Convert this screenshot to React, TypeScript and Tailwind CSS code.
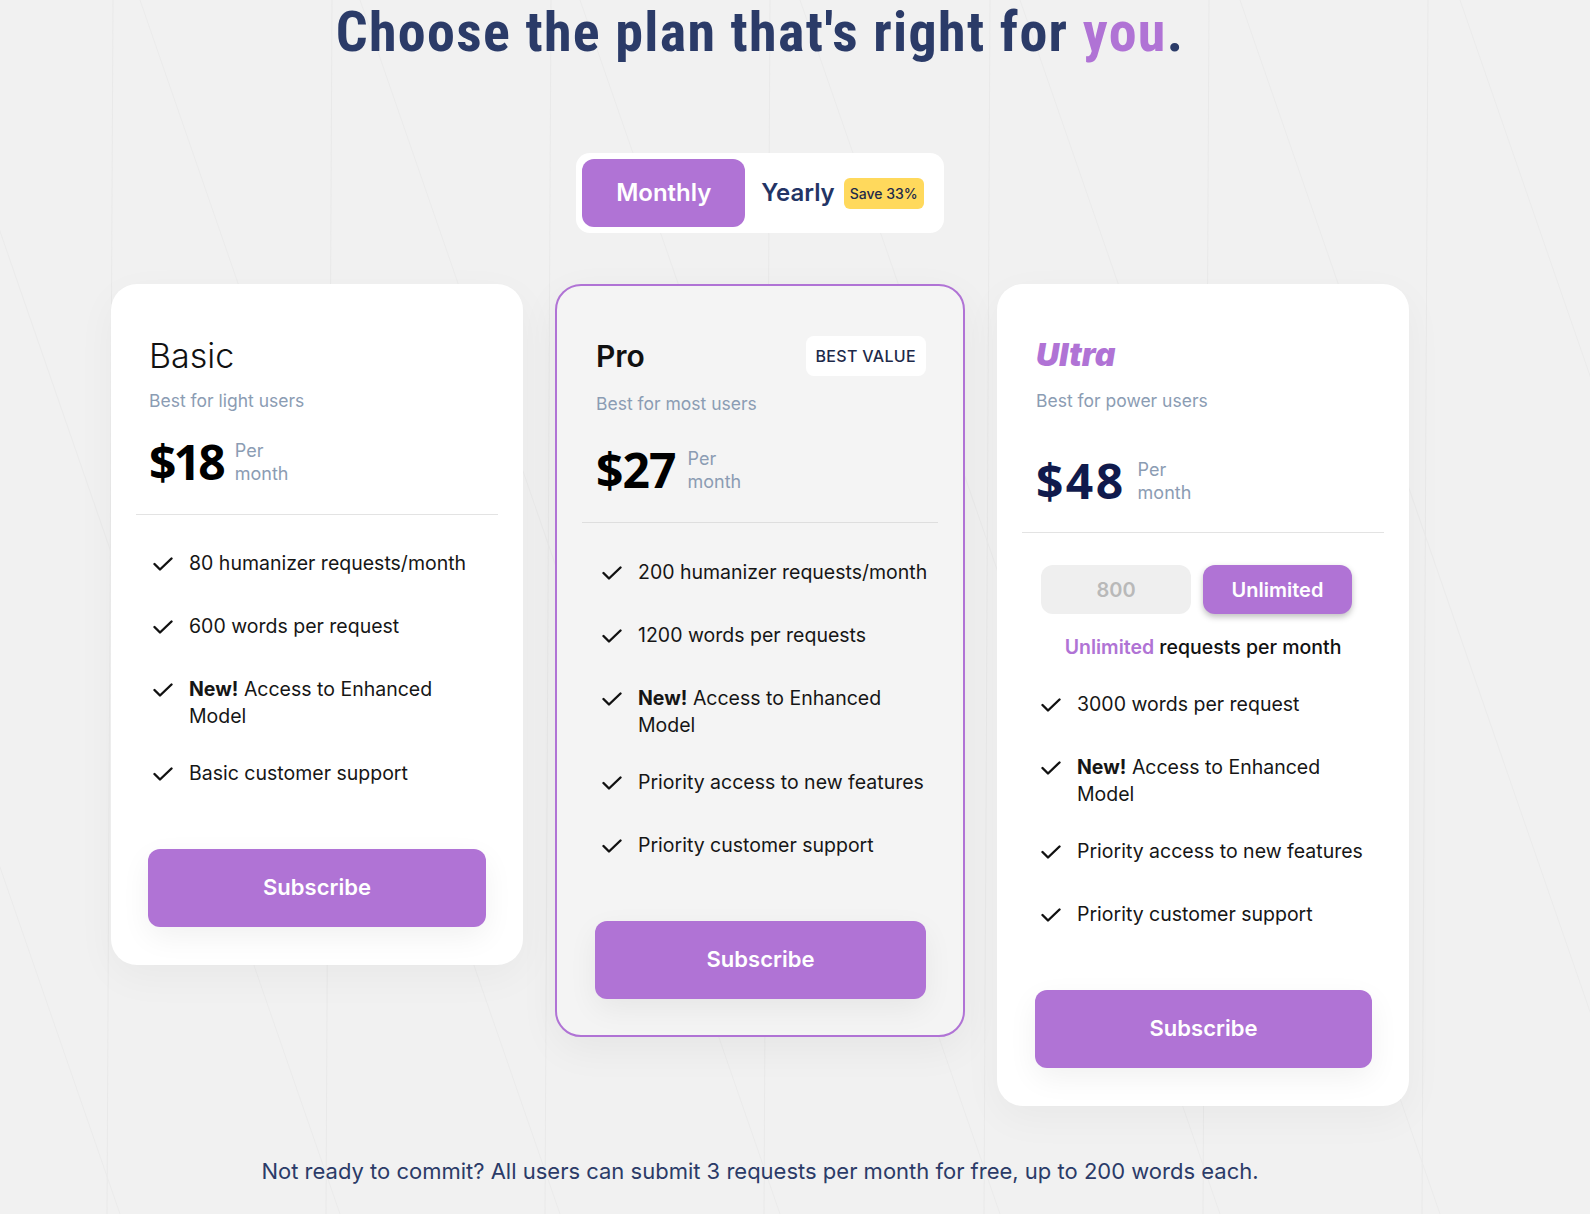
import React, { useState } from 'react';

const purple = 'bg-[#b073d5]';

const CheckIcon = () => (
  <svg width="20" height="14" viewBox="0 0 20 14" fill="none" className="mt-[7px] shrink-0">
    <path d="M1.5 7 L7 12.5 L18.5 1.5" stroke="#111111" strokeWidth="2.4" strokeLinecap="round" strokeLinejoin="round" />
  </svg>
);

type Feature = { text: string; isNew?: boolean };

const FeatureList = ({ items, className }: { items: Feature[]; className: string }) => (
  <ul className={`flex flex-col gap-[29px] ${className}`}>
    {items.map((f) => (
      <li key={f.text} className="flex items-start gap-[16px] min-h-[34px]">
        <div className="w-[20px] h-[34px] shrink-0">
          <CheckIcon />
        </div>
        <span
          className="text-[19.5px] leading-[27.4px] text-[#161616]"
          style={{ fontFamily: 'Inter, "Noto Sans", sans-serif' }}
        >
          {f.isNew ? (
            <>
              <b className="font-bold">New!</b> {f.text}
            </>
          ) : (
            f.text
          )}
        </span>
      </li>
    ))}
  </ul>
);

const SubscribeButton = ({ className }: { className: string }) => (
  <button
    className={`${purple} h-[78px] rounded-[12px] text-white text-[22px] font-semibold shadow-[0_10px_30px_rgba(0,0,0,0.06)] ${className}`}
    style={{ fontFamily: 'Inter, sans-serif' }}
  >
    Subscribe
  </button>
);

const Price = ({ amount, className }: { amount: string; className: string }) => (
  <div className="flex items-center h-[52px] gap-[12px]">
    <span className={className}>{amount}</span>
    <div
      className="flex flex-col text-[18px] leading-[23px] text-[#8b9cb3]"
      style={{ fontFamily: 'Inter, sans-serif' }}
    >
      <span>Per</span>
      <span>month</span>
    </div>
  </div>
);

const Subtitle = ({ children }: { children: React.ReactNode }) => (
  <div
    className="h-[24px] flex items-center text-[17.5px] text-[#8b9cb3]"
    style={{ fontFamily: 'Inter, sans-serif' }}
  >
    {children}
  </div>
);

const Background = () => (
  <svg className="absolute inset-0 w-full h-full" viewBox="0 0 1590 1214" preserveAspectRatio="none">
    {[113, 332, 551, 770, 990, 1209, 1428].map((x) => (
      <line key={'v' + x} x1={x} y1={0} x2={x - 6} y2={1214} stroke="#e9e9e9" strokeWidth="1" />
    ))}
    {[-300, -80, 140, 360, 580, 800, 1020, 1240, 1460].map((x) => (
      <line key={'d' + x} x1={x} y1={0} x2={x + 420} y2={1214} stroke="#ebebeb" strokeWidth="1" />
    ))}
  </svg>
);

export default function App() {
  const [billing, setBilling] = useState<'monthly' | 'yearly'>('monthly');
  const [limit, setLimit] = useState<'800' | 'unlimited'>('unlimited');

  return (
    <div className="relative w-full min-h-[1214px] bg-[#f1f1f1] overflow-hidden">
      <Background />

      <div className="relative w-[1520px] flex flex-col items-center">
        {/* Heading */}
        <h1
          className="text-[56px] leading-[64px] font-bold text-[#2b3b68] tracking-[0.024em]"
          style={{ fontFamily: '"Liberation Sans Narrow", "Roboto Condensed", Roboto, sans-serif' }}
        >
          Choose the plan that's right for <span className="text-[#b073d5]">you</span>.
        </h1>

        {/* Billing toggle */}
        <div
          className="mt-[89px] flex items-center bg-white rounded-[14px] p-[6px] pr-[20px] h-[80px]"
          style={{ fontFamily: 'Inter, sans-serif' }}
        >
          <button
            onClick={() => setBilling('monthly')}
            className={`w-[163px] h-[68px] rounded-[12px] text-[24px] font-semibold ${
              billing === 'monthly' ? 'bg-[#b073d5] text-white' : 'text-[#233465]'
            }`}
          >
            Monthly
          </button>
          <button
            onClick={() => setBilling('yearly')}
            className="ml-[16px] text-[24px] font-semibold text-[#233465]"
          >
            Yearly
          </button>
          <span className="ml-[9px] h-[31px] px-[6px] flex items-center rounded-[6px] bg-[#ffd95c] text-[14px] font-medium text-[#1e2a4a]">
            Save 33%
          </span>
        </div>

        {/* Cards */}
        <div className="mt-[51px] flex items-start gap-[32px]">
          {/* Basic */}
          <div className="w-[412px] bg-white rounded-[26px] shadow-[0_12px_40px_rgba(0,0,0,0.04)] pt-[51px] pb-[38px] flex flex-col">
            <div className="px-[38px] flex flex-col">
              <div
                className="h-[40px] flex items-center text-[34px] font-light text-[#111111]"
                style={{ fontFamily: 'Inter, sans-serif' }}
              >
                Basic
              </div>
              <div className="mt-[14px]">
                <Subtitle>Best for light users</Subtitle>
              </div>
              <div className="mt-[23px]">
                <Price
                  amount="$18"
                  className="text-[48px] font-bold text-black tracking-[-0.06em] leading-none"
                />
              </div>
            </div>
            <div className="mt-[26px] mx-[25px] h-px bg-[#e3e3e3]" />
            <FeatureList
              className="mt-[35px] pl-[42px] pr-[36px]"
              items={[
                { text: '80 humanizer requests/month' },
                { text: '600 words per request' },
                { text: 'Access to Enhanced Model', isNew: true },
                { text: 'Basic customer support' },
              ]}
            />
            <SubscribeButton className="mt-[55px] mx-[37px]" />
          </div>

          {/* Pro */}
          <div className="w-[410px] bg-[#f4f4f4] border-2 border-[#b073d5] rounded-[26px] shadow-[0_12px_40px_rgba(0,0,0,0.05)] pt-[50px] pb-[36px] flex flex-col">
            <div className="pl-[39px] pr-[37px] flex flex-col">
              <div className="h-[40px] flex items-center justify-between">
                <span
                  className="text-[30px] font-semibold text-[#111111]"
                  style={{ fontFamily: 'Inter, sans-serif' }}
                >
                  Pro
                </span>
                <span
                  className="h-[40px] px-[10px] flex items-center bg-white rounded-[8px] text-[16px] font-medium text-[#1e2a4a] tracking-[0.02em]"
                  style={{ fontFamily: 'Inter, sans-serif' }}
                >
                  BEST VALUE
                </span>
              </div>
              <div className="mt-[16px]">
                <Subtitle>Best for most users</Subtitle>
              </div>
              <div className="mt-[28px]">
                <Price
                  amount="$27"
                  className="text-[48px] font-bold text-black leading-none tracking-[-0.02em]"
                />
              </div>
            </div>
            <div className="mt-[26px] mx-[25px] h-px bg-[#dedede]" />
            <FeatureList
              className="mt-[36px] pl-[45px] pr-[34px]"
              items={[
                { text: '200 humanizer requests/month' },
                { text: '1200 words per requests' },
                { text: 'Access to Enhanced Model', isNew: true },
                { text: 'Priority access to new features' },
                { text: 'Priority customer support' },
              ]}
            />
            <SubscribeButton className="mt-[55px] ml-[38px] mr-[37px]" />
          </div>

          {/* Ultra */}
          <div className="w-[412px] bg-white rounded-[26px] shadow-[0_12px_40px_rgba(0,0,0,0.04)] pt-[51px] pb-[38px] flex flex-col">
            <div className="px-[39px] flex flex-col">
              <div
                className="h-[40px] flex items-center text-[32px] font-black italic text-[#b073d5]"
                style={{ fontFamily: 'Inter, sans-serif' }}
              >
                Ultra
              </div>
              <div className="mt-[14px]">
                <Subtitle>Best for power users</Subtitle>
              </div>
              <div className="mt-[42px]">
                <Price
                  amount="$48"
                  className="text-[48px] font-bold text-[#101a4c] tracking-[0.05em] leading-none"
                />
              </div>
            </div>
            <div className="mt-[25px] mx-[25px] h-px bg-[#e3e3e3]" />
            <div
              className="mt-[32px] pl-[44px] flex gap-[12px]"
              style={{ fontFamily: 'Inter, sans-serif' }}
            >
              <button
                onClick={() => setLimit('800')}
                className={`w-[150px] h-[49px] rounded-[12px] text-[20px] font-semibold ${
                  limit === '800'
                    ? 'bg-[#b073d5] text-white shadow-[0_3px_6px_rgba(0,0,0,0.25)]'
                    : 'bg-[#efefef] text-[#b9b9b9]'
                }`}
              >
                800
              </button>
              <button
                onClick={() => setLimit('unlimited')}
                className={`w-[149px] h-[49px] rounded-[12px] text-[20px] font-semibold ${
                  limit === 'unlimited'
                    ? 'bg-[#b073d5] text-white shadow-[0_3px_6px_rgba(0,0,0,0.25)]'
                    : 'bg-[#efefef] text-[#b9b9b9]'
                }`}
              >
                Unlimited
              </button>
            </div>
            <div
              className="mt-[22px] h-[24px] flex items-center justify-center text-[19.5px] font-medium text-[#111111]"
              style={{ fontFamily: 'Inter, sans-serif' }}
            >
              <span className="text-[#b073d5] font-semibold">
                {limit === 'unlimited' ? 'Unlimited' : '800'}
              </span>
              &nbsp;requests per month
            </div>
            <FeatureList
              className="mt-[31px] pl-[44px] pr-[34px]"
              items={[
                { text: '3000 words per request' },
                { text: 'Access to Enhanced Model', isNew: true },
                { text: 'Priority access to new features' },
                { text: 'Priority customer support' },
              ]}
            />
            <SubscribeButton className="mt-[55px] ml-[38px] mr-[37px]" />
          </div>
        </div>

        {/* Footer note */}
        <p
          className="mt-[51px] h-[30px] flex items-center text-[22px] text-[#2b3b68]"
          style={{ fontFamily: 'Inter, sans-serif' }}
        >
          Not ready to commit? All users can submit 3 requests per month for free, up to 200 words each.
        </p>
      </div>
    </div>
  );
}
